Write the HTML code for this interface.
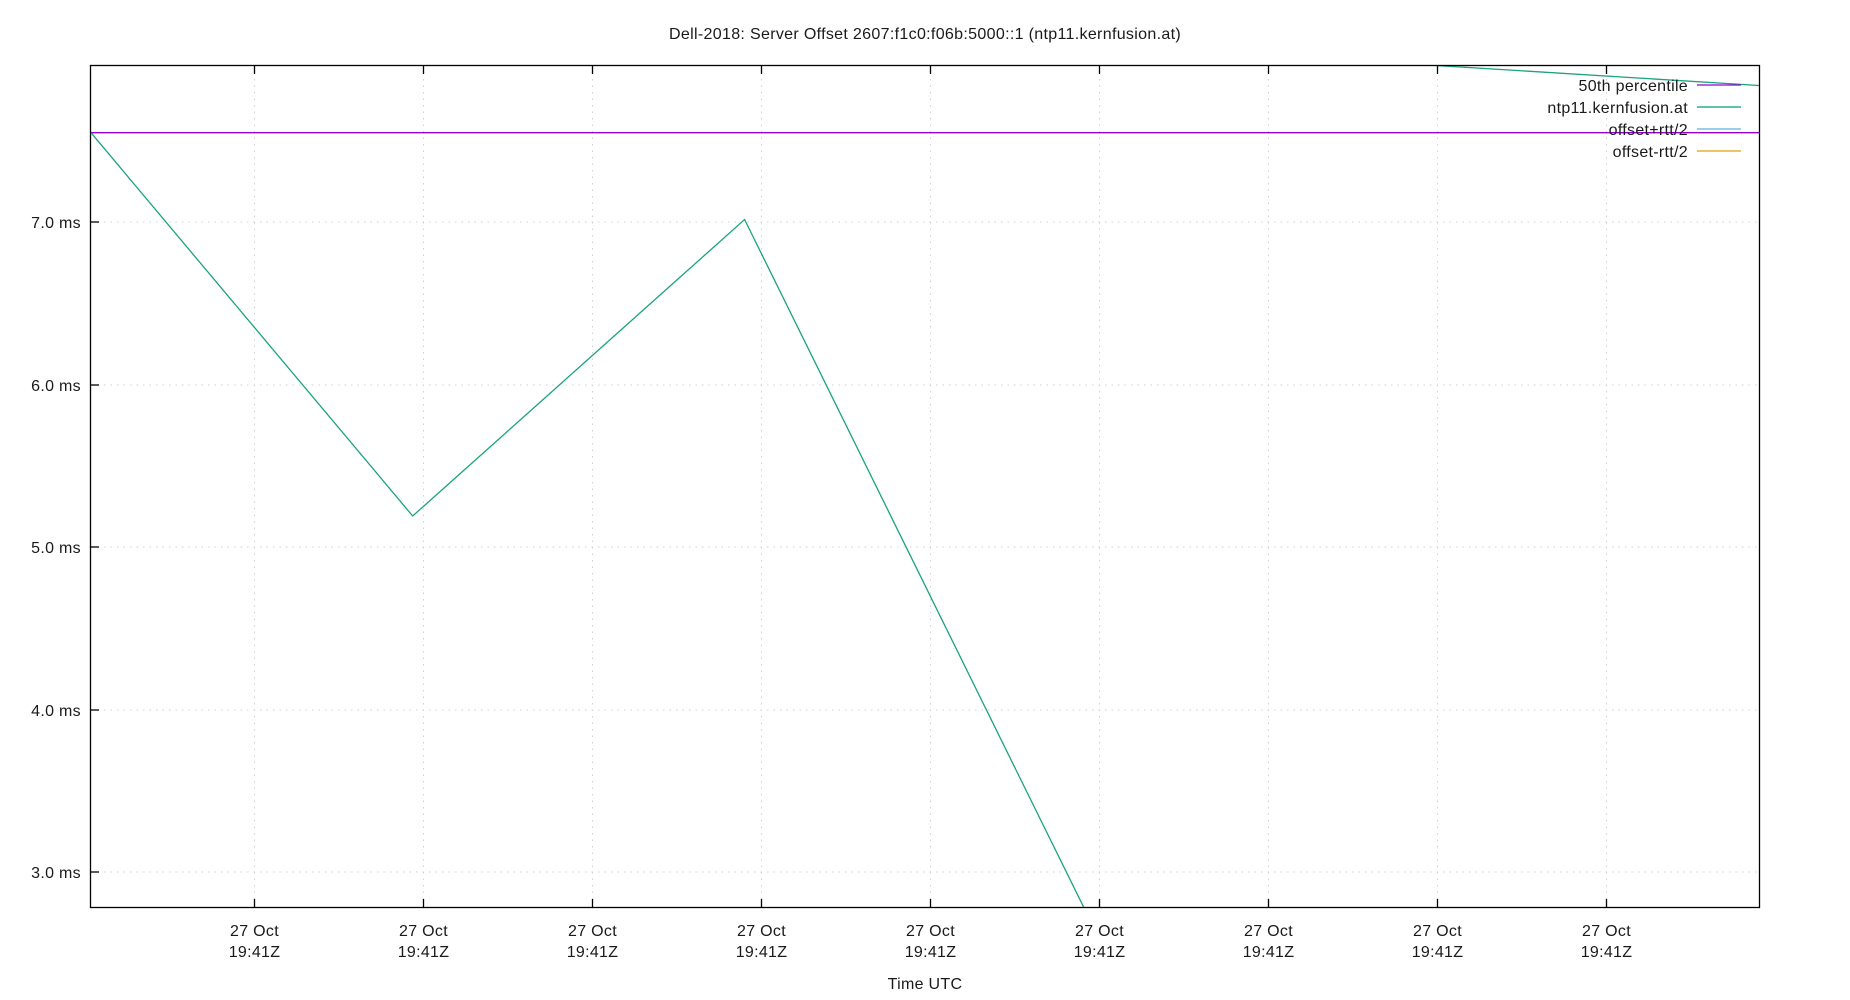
<!DOCTYPE html>
<html><head><meta charset="utf-8"><style>
html,body{margin:0;padding:0;background:#fff;width:1850px;height:1000px;overflow:hidden}
svg{display:block}
text{font-family:"Liberation Sans","DejaVu Sans",sans-serif;font-size:16px;fill:#1a1a1a;letter-spacing:0.3px}
</style></head><body>
<svg width="1850" height="1000" viewBox="0 0 1850 1000">
<g stroke="#d0d0d0" stroke-width="1" stroke-dasharray="1.5,5" fill="none">
<line x1="91" y1="222" x2="1759" y2="222"/>
<line x1="91" y1="385" x2="1759" y2="385"/>
<line x1="91" y1="547" x2="1759" y2="547"/>
<line x1="91" y1="710" x2="1759" y2="710"/>
<line x1="91" y1="872" x2="1759" y2="872"/>
<line x1="254.5" y1="66" x2="254.5" y2="907"/>
<line x1="423.5" y1="66" x2="423.5" y2="907"/>
<line x1="592.5" y1="66" x2="592.5" y2="907"/>
<line x1="761.5" y1="66" x2="761.5" y2="907"/>
<line x1="930.5" y1="66" x2="930.5" y2="907"/>
<line x1="1099.5" y1="66" x2="1099.5" y2="907"/>
<line x1="1268.5" y1="66" x2="1268.5" y2="907"/>
<line x1="1437.5" y1="66" x2="1437.5" y2="907"/>
<line x1="1606.5" y1="66" x2="1606.5" y2="907"/>
</g>
<g stroke="#000" stroke-width="1.3">
<line x1="91" y1="222" x2="99" y2="222"/><line x1="91" y1="385" x2="99" y2="385"/>
<line x1="91" y1="547" x2="99" y2="547"/><line x1="91" y1="710" x2="99" y2="710"/>
<line x1="91" y1="872" x2="99" y2="872"/>
<line x1="254.5" y1="907" x2="254.5" y2="899"/><line x1="423.5" y1="907" x2="423.5" y2="899"/>
<line x1="592.5" y1="907" x2="592.5" y2="899"/><line x1="761.5" y1="907" x2="761.5" y2="899"/>
<line x1="930.5" y1="907" x2="930.5" y2="899"/><line x1="1099.5" y1="907" x2="1099.5" y2="899"/>
<line x1="1268.5" y1="907" x2="1268.5" y2="899"/><line x1="1437.5" y1="907" x2="1437.5" y2="899"/>
<line x1="1606.5" y1="907" x2="1606.5" y2="899"/>
<line x1="254.5" y1="66" x2="254.5" y2="74"/><line x1="423.5" y1="66" x2="423.5" y2="74"/>
<line x1="592.5" y1="66" x2="592.5" y2="74"/><line x1="761.5" y1="66" x2="761.5" y2="74"/>
<line x1="930.5" y1="66" x2="930.5" y2="74"/><line x1="1099.5" y1="66" x2="1099.5" y2="74"/>
<line x1="1268.5" y1="66" x2="1268.5" y2="74"/><line x1="1437.5" y1="66" x2="1437.5" y2="74"/>
<line x1="1606.5" y1="66" x2="1606.5" y2="74"/>
</g>
<clipPath id="c"><rect x="91" y="66" width="1668" height="841"/></clipPath>
<g clip-path="url(#c)" fill="none">
<line x1="91" y1="132.7" x2="1759" y2="132.7" stroke="#9400d3" stroke-width="1.3"/>
<polyline points="91,132.7 412.7,516 744.6,219.5 1090,920" stroke="#1aa37d" stroke-width="1.3"/>
<polyline points="1428,65 1759,85.5" stroke="#1aa37d" stroke-width="1.3"/>
</g>
<rect x="90.5" y="65.5" width="1669" height="842" fill="none" stroke="#000" stroke-width="1.3"/>
<g text-anchor="end">
<text x="1688" y="91">50th percentile</text>
<text x="1688" y="113">ntp11.kernfusion.at</text>
<text x="1688" y="135">offset+rtt/2</text>
<text x="1688" y="157">offset-rtt/2</text>
<text x="81" y="228">7.0 ms</text>
<text x="81" y="391">6.0 ms</text>
<text x="81" y="553">5.0 ms</text>
<text x="81" y="716">4.0 ms</text>
<text x="81" y="878">3.0 ms</text>
</g>
<g stroke-width="1.3">
<line x1="1697" y1="85" x2="1741" y2="85" stroke="#9400d3"/>
<line x1="1697" y1="107" x2="1741" y2="107" stroke="#009e73"/>
<line x1="1697" y1="129" x2="1741" y2="129" stroke="#56b4e9"/>
<line x1="1697" y1="151" x2="1741" y2="151" stroke="#e69f00"/>
</g>
<g text-anchor="middle">
<text x="925" y="39" textLength="512" lengthAdjust="spacingAndGlyphs">Dell-2018: Server Offset 2607:f1c0:f06b:5000::1 (ntp11.kernfusion.at)</text>
<text x="254.5" y="936">27 Oct</text><text x="254.5" y="957">19:41Z</text>
<text x="423.5" y="936">27 Oct</text><text x="423.5" y="957">19:41Z</text>
<text x="592.5" y="936">27 Oct</text><text x="592.5" y="957">19:41Z</text>
<text x="761.5" y="936">27 Oct</text><text x="761.5" y="957">19:41Z</text>
<text x="930.5" y="936">27 Oct</text><text x="930.5" y="957">19:41Z</text>
<text x="1099.5" y="936">27 Oct</text><text x="1099.5" y="957">19:41Z</text>
<text x="1268.5" y="936">27 Oct</text><text x="1268.5" y="957">19:41Z</text>
<text x="1437.5" y="936">27 Oct</text><text x="1437.5" y="957">19:41Z</text>
<text x="1606.5" y="936">27 Oct</text><text x="1606.5" y="957">19:41Z</text>
<text x="925" y="989">Time UTC</text>
</g>
</svg>
</body></html>
